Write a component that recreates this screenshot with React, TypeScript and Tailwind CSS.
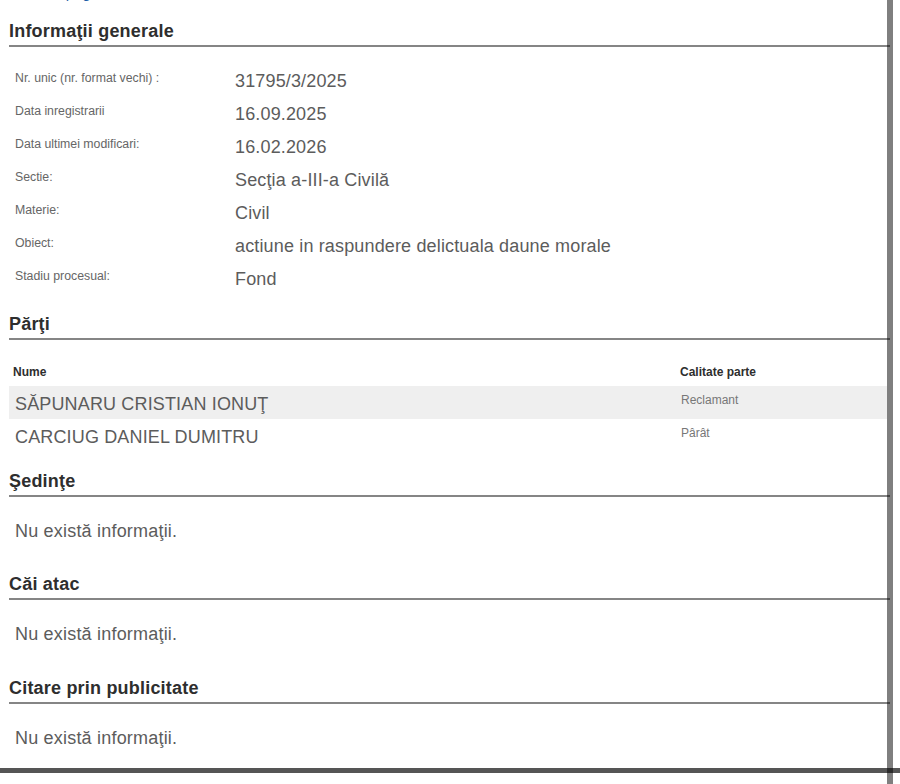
const info: [string, string][] = [
  ["Nr. unic (nr. format vechi) :", "31795/3/2025"],
  ["Data inregistrarii", "16.09.2025"],
  ["Data ultimei modificari:", "16.02.2026"],
  ["Sectie:", "Secţia a-III-a Civilă"],
  ["Materie:", "Civil"],
  ["Obiect:", "actiune in raspundere delictuala daune morale"],
  ["Stadiu procesual:", "Fond"],
];

const parti: [string, string][] = [
  ["SĂPUNARU CRISTIAN IONUŢ", "Reclamant"],
  ["CARCIUG DANIEL DUMITRU", "Pârât"],
];

function SectionTitle({ children }: { children: React.ReactNode }) {
  return (
    <h2 className="ml-[9px] mr-[-3px] border-b-2 border-[#858585] pb-[3px] text-[18px] font-bold leading-[22px] tracking-[0.2px] text-[#2e2e2e]">
      {children}
    </h2>
  );
}

function Empty() {
  return (
    <p className="pl-[15px] pt-[18px] pb-[8px] text-[18px] leading-[33px] tracking-[0.2px] text-[#5c5c5c]">
      Nu există informaţii.
    </p>
  );
}

export default function App() {
  return (
    <div className="flex h-[784px] w-[900px] overflow-hidden bg-white font-['Liberation_Sans',Arial,sans-serif]">
      <div className="w-[887px] shrink-0">
        <div className="h-[20px] overflow-hidden pl-[9px]">
          <a className="-mt-[15px] block text-[15px] leading-[15px] text-[#1f5fa8]">Dosare, pagina 1</a>
        </div>

        <SectionTitle>Informaţii generale</SectionTitle>
        <div className="pt-[18px]">
          {info.map(([label, value]) => (
            <div key={label} className="flex h-[33px] items-start">
              <div className="w-[235px] shrink-0 pl-[15px] text-[12.3px] leading-[27px] text-[#666]">{label}</div>
              <div className="text-[18px] leading-[33px] tracking-[0.15px] text-[#5c5c5c]">{value}</div>
            </div>
          ))}
        </div>

        <div className="pt-[17px]">
          <SectionTitle>Părţi</SectionTitle>
        </div>
        <div className="ml-[9px] mt-[24px]">
          <div className="grid grid-cols-[671px_1fr] pb-[6px] text-[12px] font-bold leading-[16px] text-[#2e2e2e]">
            <div className="pl-[4px]">Nume</div>
            <div>Calitate parte</div>
          </div>
          {parti.map(([name, role], i) => (
            <div key={name} className={`grid h-[33px] grid-cols-[671px_1fr] ${i === 0 ? "bg-[#efefef]" : ""}`}>
              <div className="pl-[6px] pt-[4px] text-[18px] leading-[29px] tracking-[0.15px] text-[#5c5c5c]">{name}</div>
              <div className="pl-[1px] pt-[6px] text-[12px] leading-[16px] text-[#777]">{role}</div>
            </div>
          ))}
        </div>

        <div className="pt-[17.5px]">
          <SectionTitle>Şedinţe</SectionTitle>
        </div>
        <Empty />

        <div className="pt-[17.5px]">
          <SectionTitle>Căi atac</SectionTitle>
        </div>
        <Empty />

        <div className="pt-[17.5px]">
          <SectionTitle>Citare prin publicitate</SectionTitle>
        </div>
        <Empty />

        <div className="mt-[5px] h-[5px] w-[900px] bg-[#555]" />
      </div>
      <div className="w-[6px] shrink-0 bg-black/50" />
      <div className="flex-1" />
    </div>
  );
}
